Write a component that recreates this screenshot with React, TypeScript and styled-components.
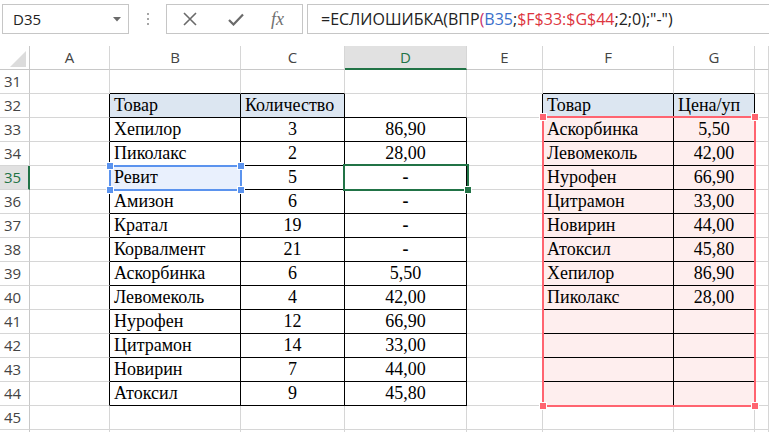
import React from 'react';
import styled, { createGlobalStyle } from 'styled-components';

const GlobalStyle = createGlobalStyle`
  html, body {
    margin: 0;
    padding: 0;
    background: #ffffff;
    overflow: hidden;
  }
`;

const GRID = '#d6d6d6';
const GREEN = '#217346';

const Page = styled.div`
  width: 769px;
  height: 432px;
  overflow: hidden;
  background: #fff;
  font-family: "Open Sans", "Noto Sans", sans-serif;
`;

/* ---------- formula bar ---------- */

const TopBar = styled.div`
  height: 46px;
  box-sizing: border-box;
  padding: 4px 0 0 2px;
  display: flex;
  align-items: flex-start;
`;

const NameBox = styled.div`
  width: 127px;
  height: 30px;
  box-sizing: border-box;
  border: 1px solid #c6c6c6;
  display: flex;
  align-items: center;
  justify-content: space-between;
  padding: 0 7px 0 10px;
  font-size: 15px;
  color: #222;
`;

const DotsArea = styled.div`
  width: 37px;
  height: 30px;
  display: flex;
  align-items: center;
  justify-content: center;
`;

const ButtonsBox = styled.div`
  width: 137px;
  height: 30px;
  box-sizing: border-box;
  border: 1px solid #c6c6c6;
  display: grid;
  grid-template-columns: 46px 46px 1fr;
  align-items: center;
  justify-items: center;
`;

const FxLabel = styled.span`
  font-family: "Liberation Serif", serif;
  font-style: italic;
  font-size: 18px;
  color: #6f6f6f;
  margin-right: 6px;
`;

const FormulaBox = styled.div`
  flex: 1;
  height: 30px;
  margin-left: 4px;
  box-sizing: border-box;
  border: 1px solid #c6c6c6;
  border-right: none;
  display: flex;
  align-items: center;
  padding-left: 13px;
  font-size: 16px;
  color: #222;
  white-space: nowrap;
`;

const Ref = styled.span<{ $color: string }>`
  color: ${p => p.$color};
`;

/* ---------- sheet ---------- */

const Sheet = styled.div`
  position: relative;
  display: grid;
  grid-template-columns: 30px 80px 131px 104px 122px 76px 131px 81px 1fr;
  grid-auto-rows: 24px;
  height: 386px;
  overflow: hidden;
`;

const Corner = styled.div`
  box-sizing: border-box;
  border-right: 1px solid #c8c8c8;
  border-bottom: 1px solid #c8c8c8;
  display: flex;
  align-items: flex-end;
  justify-content: flex-end;
  padding: 0 3px 2px 0;
`;

const ColHeader = styled.div<{ $active?: boolean }>`
  box-sizing: border-box;
  border-right: 1px solid ${GRID};
  border-bottom: ${p => (p.$active ? `2px solid ${GREEN}` : '1px solid #c8c8c8')};
  background: ${p => (p.$active ? '#e1e1e1' : '#fff')};
  color: ${p => (p.$active ? GREEN : '#444')};
  font-size: 15px;
  text-align: center;
  line-height: 23px;
`;

const RowHeader = styled.div<{ $active?: boolean }>`
  box-sizing: border-box;
  border-right: ${p => (p.$active ? `2px solid ${GREEN}` : '1px solid #c8c8c8')};
  border-bottom: 1px solid ${GRID};
  background: ${p => (p.$active ? '#e1e1e1' : '#fff')};
  color: ${p => (p.$active ? GREEN : '#444')};
  font-size: 15px;
  line-height: 23px;
  padding-left: 4px;
`;

const Cell = styled.div<{ $rb: boolean; $bb: boolean; $bg: string; $align: 'left' | 'center' }>`
  box-sizing: border-box;
  border-right: 1px solid ${p => (p.$rb ? '#000' : GRID)};
  border-bottom: 1px solid ${p => (p.$bb ? '#000' : GRID)};
  background: ${p => p.$bg};
  text-align: ${p => p.$align};
  font-family: "Liberation Serif", "Times New Roman", serif;
  font-size: 18px;
  line-height: 23px;
  color: #000;
  padding: 0 3px 0 ${p => (p.$align === 'left' ? '4px' : '3px')};
  white-space: nowrap;
  overflow: hidden;
`;

const Dash = styled.span`
  font-weight: bold;
`;

const RangeFrame = styled.div<{ $color: string }>`
  position: absolute;
  box-sizing: border-box;
  border: 2px solid ${p => p.$color};
  pointer-events: none;
`;

const Handle = styled.div<{ $color: string }>`
  position: absolute;
  width: 6px;
  height: 6px;
  box-sizing: border-box;
  background: ${p => p.$color};
  outline: 1px solid #fff;
`;

/* ---------- data ---------- */

const COLS = ['A', 'B', 'C', 'D', 'E', 'F', 'G', 'H'];
const ROWS = Array.from({ length: 16 }, (_, i) => 31 + i);

const left: [string, string, string][] = [
  ['Хепилор', '3', '86,90'],
  ['Пиколакс', '2', '28,00'],
  ['Ревит', '5', '-'],
  ['Амизон', '6', '-'],
  ['Кратал', '19', '-'],
  ['Корвалмент', '21', '-'],
  ['Аскорбинка', '6', '5,50'],
  ['Левомеколь', '4', '42,00'],
  ['Нурофен', '12', '66,90'],
  ['Цитрамон', '14', '33,00'],
  ['Новирин', '7', '44,00'],
  ['Атоксил', '9', '45,80'],
];

const right: [string, string][] = [
  ['Аскорбинка', '5,50'],
  ['Левомеколь', '42,00'],
  ['Нурофен', '66,90'],
  ['Цитрамон', '33,00'],
  ['Новирин', '44,00'],
  ['Атоксил', '45,80'],
  ['Хепилор', '86,90'],
  ['Пиколакс', '28,00'],
];

const values: Record<string, string> = {
  B32: 'Товар',
  C32: 'Количество',
  F32: 'Товар',
  G32: 'Цена/уп',
};
left.forEach(([b, c, d], i) => {
  values[`B${33 + i}`] = b;
  values[`C${33 + i}`] = c;
  values[`D${33 + i}`] = d;
});
right.forEach(([f, g], i) => {
  values[`F${33 + i}`] = f;
  values[`G${33 + i}`] = g;
});

const bordered = (r: number, c: number) => {
  const col = COLS[c];
  if (!col) return false;
  if ((col === 'B' || col === 'C') && r >= 32 && r <= 44) return true;
  if (col === 'D' && r >= 33 && r <= 44) return true;
  if ((col === 'F' || col === 'G') && r >= 32 && r <= 44) return true;
  return false;
};

const cellBg = (r: number, col: string) => {
  if (r === 32 && ['B', 'C', 'F', 'G'].includes(col)) return '#dce6f1';
  if (r === 35 && col === 'B') return '#e9f0fd';
  if (r >= 33 && r <= 44 && (col === 'F' || col === 'G')) return '#feeeee';
  return '#fff';
};

const centered = (r: number, col: string) =>
  r >= 33 && (col === 'C' || col === 'D' || col === 'G');

/* ---------- icons ---------- */

const DropArrow = () => (
  <svg width="8" height="5" viewBox="0 0 8 5">
    <path d="M0 0 L8 0 L4 4.5 Z" fill="#6a6a6a" />
  </svg>
);

const Dots = () => (
  <svg width="4" height="14" viewBox="0 0 4 14">
    <rect x="1" y="1" width="2" height="2" fill="#a6a6a6" />
    <rect x="1" y="6" width="2" height="2" fill="#a6a6a6" />
    <rect x="1" y="11" width="2" height="2" fill="#a6a6a6" />
  </svg>
);

const CancelIcon = () => (
  <svg width="14" height="14" viewBox="0 0 14 14">
    <path d="M1 1 L13 13 M13 1 L1 13" stroke="#6a6a6a" strokeWidth="1.6" fill="none" />
  </svg>
);

const EnterIcon = () => (
  <svg width="16" height="13" viewBox="0 0 16 13">
    <path d="M1 7 L5.5 11.5 L15 1.5" stroke="#6a6a6a" strokeWidth="2.2" fill="none" />
  </svg>
);

const CornerTriangle = () => (
  <svg width="16" height="16" viewBox="0 0 16 16">
    <path d="M16 0 L16 16 L0 16 Z" fill="#dcdcdc" />
  </svg>
);

/* ---------- app ---------- */

const handlesAt = (x: number, y: number, w: number, h: number, color: string, key: string) =>
  [
    [x, y],
    [x + w, y],
    [x, y + h],
    [x + w, y + h],
  ].map(([hx, hy], i) => (
    <Handle key={`${key}${i}`} $color={color} style={{ left: hx - 3, top: hy - 3 }} />
  ));

export default function App() {
  return (
    <Page>
      <GlobalStyle />
      <TopBar>
        <NameBox>
          <span>D35</span>
          <DropArrow />
        </NameBox>
        <DotsArea>
          <Dots />
        </DotsArea>
        <ButtonsBox>
          <CancelIcon />
          <EnterIcon />
          <FxLabel>fx</FxLabel>
        </ButtonsBox>
        <FormulaBox>
          =ЕСЛИОШИБКА(ВПР<Ref $color="#c8326e">(</Ref>
          <Ref $color="#3a6fcb">B35</Ref>;<Ref $color="#dd3540">$F$33:$G$44</Ref>;2;0);"-")
        </FormulaBox>
      </TopBar>

      <Sheet>
        <Corner>
          <CornerTriangle />
        </Corner>
        {COLS.map(c => (
          <ColHeader key={c} $active={c === 'D'}>
            {c === 'H' ? '' : c}
          </ColHeader>
        ))}

        {ROWS.map(r => (
          <React.Fragment key={r}>
            <RowHeader $active={r === 35}>{r <= 45 ? r : ''}</RowHeader>
            {COLS.map((col, ci) => {
              const v = values[`${col}${r}`] ?? '';
              return (
                <Cell
                  key={col}
                  $rb={bordered(r, ci) || bordered(r, ci + 1)}
                  $bb={bordered(r, ci) || bordered(r + 1, ci)}
                  $bg={cellBg(r, col)}
                  $align={centered(r, col) ? 'center' : 'left'}
                >
                  {v === '-' ? <Dash>-</Dash> : v}
                </Cell>
              );
            })}
          </React.Fragment>
        ))}

        {/* reference range B35 */}
        <RangeFrame $color="#5b93ee" style={{ left: 109, top: 119, width: 133, height: 26 }} />
        {handlesAt(110, 120, 131, 24, '#5b93ee', 'b')}

        {/* reference range F33:G44 */}
        <RangeFrame $color="#ff6470" style={{ left: 542, top: 70, width: 214, height: 291 }} />
        {handlesAt(543, 71, 212, 289, '#ff6470', 'f')}

        {/* active cell D35 */}
        <RangeFrame $color={GREEN} style={{ left: 343, top: 118, width: 126, height: 27 }} />
        <Handle $color={GREEN} style={{ left: 465, top: 141 }} />
      </Sheet>
    </Page>
  );
}
